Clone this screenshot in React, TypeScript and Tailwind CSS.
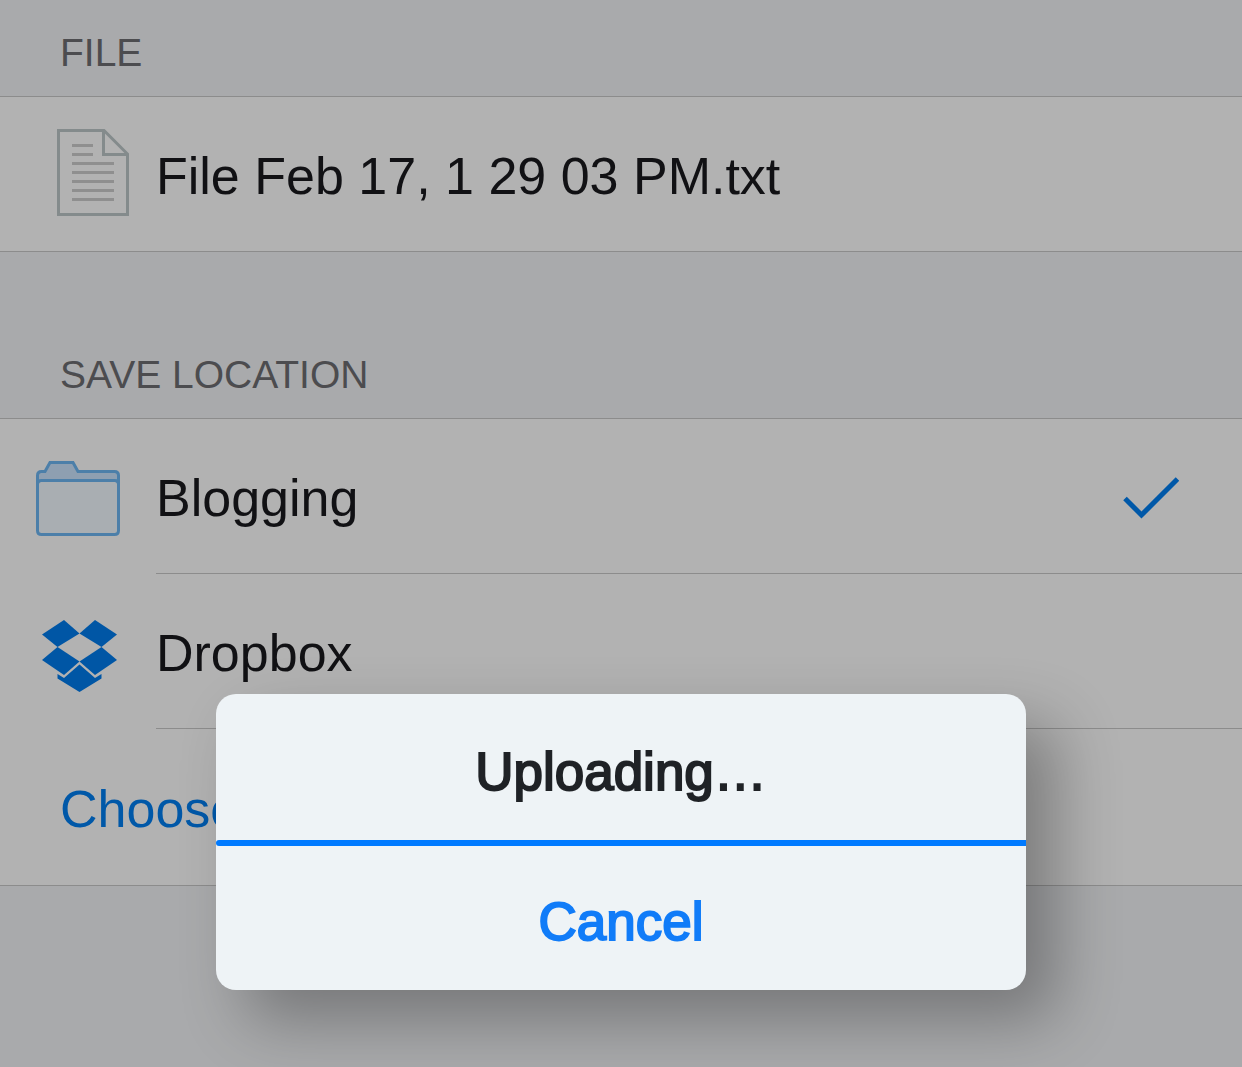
import type { ReactNode } from "react";

const FileIcon = () => (
  <svg width="72" height="87" viewBox="0 0 72 87" fill="none" aria-hidden="true">
    <path d="M1.5 1.5H47L70.5 25V85.5H1.5Z" stroke="#848b8c" strokeWidth="3" />
    <path d="M46.5 1.5V25.5H70.5" stroke="#848b8c" strokeWidth="3" />
    <path
      d="M15 16.5H36M15 25.5H36M15 34.5H57M15 43.5H57M15 52.5H57M15 61.5H57M15 70.5H57"
      stroke="#8f8f8f"
      strokeWidth="3"
    />
  </svg>
);

const FolderIcon = () => (
  <svg width="84" height="75" viewBox="0 0 84 75" aria-hidden="true">
    <path
      d="M1.5 20V14.5Q1.5 10.5 5.5 10.5H9L14 1.5H37L42 10.5H78.5Q82.5 10.5 82.5 14.5V20Z"
      fill="#8e9fb1"
    />
    <rect x="1.5" y="19.5" width="81" height="54" rx="4" fill="#a9aeb2" />
    <path
      d="M1.5 69.5V14.5Q1.5 10.5 5.5 10.5H9L14 1.5H37L42 10.5H78.5Q82.5 10.5 82.5 14.5V69.5Q82.5 73.5 78.5 73.5H5.5Q1.5 73.5 1.5 69.5ZM1.5 23.5Q1.5 19.5 5.5 19.5H78.5Q82.5 19.5 82.5 23.5"
      fill="none"
      stroke="#4c7fa9"
      strokeWidth="3"
    />
  </svg>
);

const DropboxIcon = () => (
  <svg width="76" height="72" viewBox="0 0 76 72" fill="#0056a5" aria-hidden="true">
    <path d="M22 0L37.5 13.5L15.5 27L0 14.5Z" />
    <path d="M53 0L75 14.5L59.5 27L37.5 13.5Z" />
    <path d="M15.5 27L37.5 41.5L22 55L0 40Z" />
    <path d="M59.5 27L75 40L53 55L37.5 41.5Z" />
    <path d="M37.5 44.5L53 58L59.5 54V58.5L37.5 72L15.5 58.5V54L22 58Z" />
  </svg>
);

const CheckIcon = () => (
  <svg width="56" height="42" viewBox="0 0 56 42" fill="none" aria-hidden="true">
    <path d="M2 21.5L18.5 38L54.5 2" stroke="#0058a8" strokeWidth="5" />
  </svg>
);

const SectionTitle = ({ children }: { children: ReactNode }) => (
  <h2 className="px-15 pt-7 pb-[19px] text-[39px] leading-12 text-[#4c4c4f]">{children}</h2>
);

const Row = ({ icon, label, checked }: { icon: ReactNode; label: string; checked?: boolean }) => (
  <button type="button" className="flex w-full items-center text-left">
    <span className="flex w-39 shrink-0 items-center pt-1">{icon}</span>
    <span className="flex h-[155px] flex-1 items-center justify-between border-b border-[#8c8c8c] pt-1 pr-[63px]">
      {label}
      {checked && <CheckIcon />}
    </span>
  </button>
);

const UploadDialog = () => (
  <div className="fixed inset-0 flex items-end justify-center pb-[77px]">
    <div
      role="dialog"
      aria-labelledby="upload-title"
      className="w-[810px] overflow-hidden rounded-[20px] bg-[#eef3f6] text-center text-[53px] leading-[60px] shadow-[30px_30px_64px_rgba(0,0,0,0.3)]"
    >
      <h1 id="upload-title" className="pt-12 pb-[38px] text-[#1f2226] [-webkit-text-stroke:2px]">
        Uploading…
      </h1>
      {/* Upload progress */}
      <div className="h-1.5 rounded-l-full bg-[#007aff]" />
      <button type="button" className="w-full pt-[46px] pb-[38px] text-[#117cf8] [-webkit-text-stroke:2px]">
        Cancel
      </button>
    </div>
  </div>
);

export default function App() {
  return (
    <main className="min-h-screen bg-[#a9aaac] font-['Liberation_Sans',Arial,sans-serif] text-[52px] leading-[60px] text-[#111114]">
      <section className="pt-px">
        <SectionTitle>FILE</SectionTitle>
        <div className="flex h-39 items-center border-y border-[#8c8c8c] bg-[#b2b2b2]">
          <span className="w-39 shrink-0 pb-1 pl-[57px]">
            <FileIcon />
          </span>
          <span className="pt-1">File Feb 17, 1 29 03 PM.txt</span>
        </div>
      </section>
      <section className="pt-[71px]">
        <SectionTitle>SAVE LOCATION</SectionTitle>
        <div className="border-y border-[#8c8c8c] bg-[#b2b2b2]">
          <Row icon={<span className="pl-9"><FolderIcon /></span>} label="Blogging" checked />
          <Row icon={<span className="pt-1 pl-[42px]"><DropboxIcon /></span>} label="Dropbox" />
          <button type="button" className="block h-39 w-full px-15 pt-1 text-left text-[#0058a8]">
            Choose…
          </button>
        </div>
      </section>
      <UploadDialog />
    </main>
  );
}
